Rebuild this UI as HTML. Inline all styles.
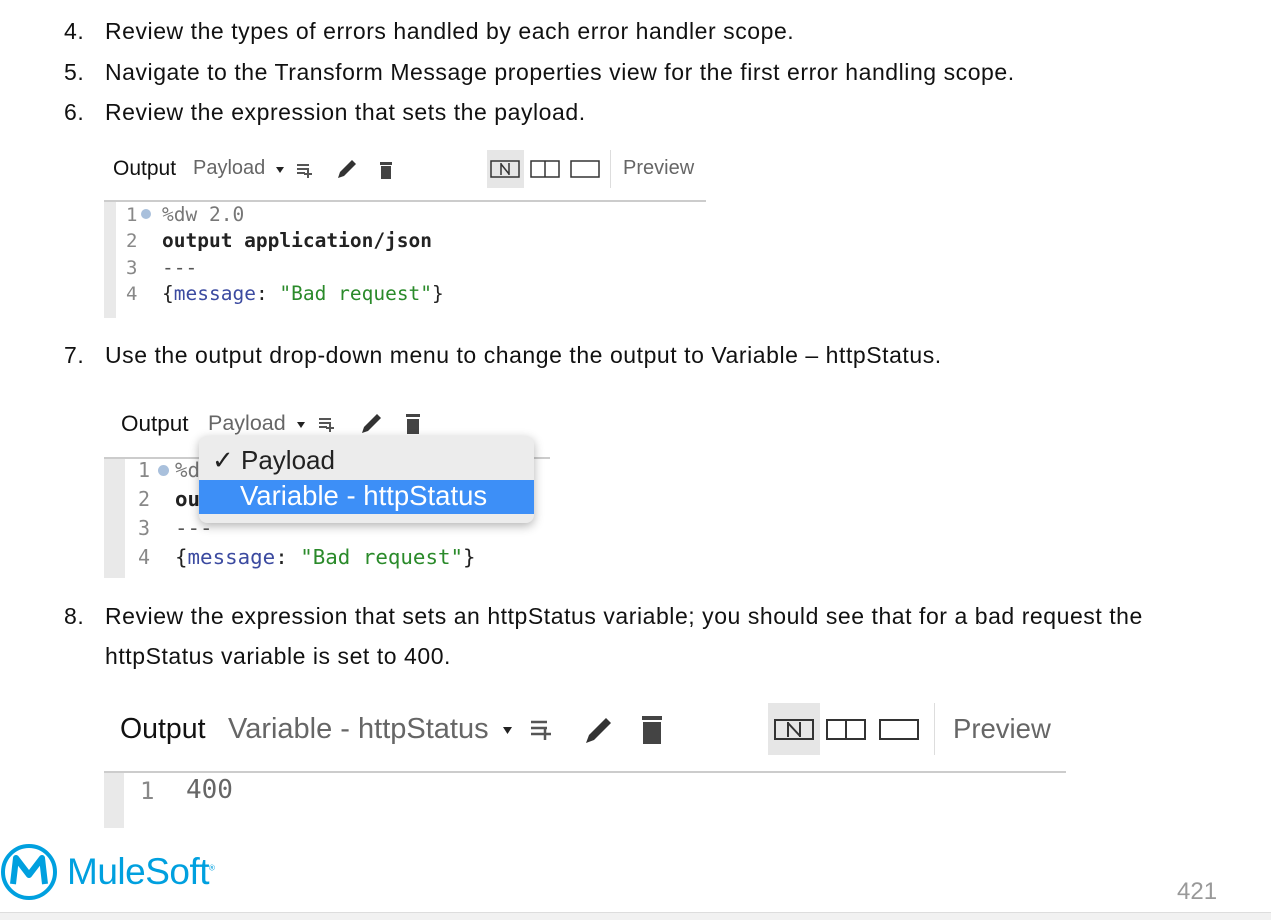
<!DOCTYPE html>
<html><head><meta charset="utf-8"><style>
body{margin:0;width:1271px;height:919px;background:#fff;position:relative;overflow:hidden;font-family:"Liberation Sans",Arial,sans-serif;color:#111}
.a{position:absolute;white-space:nowrap}
.li{font-size:23px;line-height:24px;letter-spacing:0.55px}
.mono{font-family:"DejaVu Sans Mono","Liberation Mono",monospace}
.g{color:#555}
</style></head><body>
<div class="a li" style="left:64px;top:19px">4.</div><div class="a li" style="left:105px;top:19px">Review the types of errors handled by each error handler scope.</div>
<div class="a li" style="left:64px;top:60px">5.</div><div class="a li" style="left:105px;top:60px">Navigate to the Transform Message properties view for the first error handling scope.</div>
<div class="a li" style="left:64px;top:100px">6.</div><div class="a li" style="left:105px;top:100px">Review the expression that sets the payload.</div>
<div class="a li" style="left:64px;top:343px">7.</div><div class="a li" style="left:105px;top:343px">Use the output drop-down menu to change the output to Variable – httpStatus.</div>
<div class="a li" style="left:64px;top:604px">8.</div><div class="a li" style="left:105px;top:604px">Review the expression that sets an httpStatus variable; you should see that for a bad request the</div>
<div class="a li" style="left:105px;top:644px">httpStatus variable is set to 400.</div>

<!-- Screenshot 1 -->
<div class="a" style="left:113px;top:157px;font-size:21px">Output</div>
<div class="a g" style="left:193px;top:157px;font-size:20px;color:#666">Payload</div>
<svg class="a" style="left:270px;top:156px" width="140" height="28">
<path d="M6 11 L14 11 L10 17Z" fill="#222"/>
<g stroke="#555" stroke-width="2"><path d="M27 9h12M27 13h12M27 17h8M38 13v9M34 18h8"/></g>
<path d="M68 22l2-6 12-12 4 4-12 12z" fill="#333"/>
<rect x="110" y="6" width="12" height="3" fill="#444"/><rect x="111" y="10" width="10" height="13" fill="#444"/>
</svg>
<div class="a" style="left:487px;top:150px;width:37px;height:38px;background:#e6e6e6"></div>
<svg class="a" style="left:487px;top:150px" width="120" height="38">
<g fill="none" stroke="#333" stroke-width="1.5"><rect x="4" y="11" width="28" height="16"/><rect x="44" y="11" width="28" height="16"/><line x1="58" y1="11" x2="58" y2="27"/><rect x="84" y="11" width="28" height="16"/><path d="M14 13v12M22 13v12M14 14l8 10"/></g>
</svg>
<div class="a" style="left:610px;top:150px;width:1px;height:38px;background:#ddd"></div>
<div class="a" style="left:623px;top:157px;font-size:20px;color:#666">Preview</div>
<div class="a" style="left:104px;top:200px;width:602px;height:2px;background:#ccc"></div>
<div class="a" style="left:104px;top:202px;width:12px;height:116px;background:#e9e9e9"></div>
<div class="a mono" style="left:126px;top:202px;font-size:19px;line-height:26.3px;color:#888">1<br>2<br>3<br>4</div>
<div class="a" style="left:141px;top:209px;width:10px;height:10px;border-radius:50%;background:#a9c0dc"></div>
<div class="a mono" style="left:162px;top:202px;font-size:19.5px;line-height:26.3px;color:#222"><span style="color:#777">%dw 2.0</span><br><b style="font-weight:600">output application/json</b><br><span style="color:#555">---</span><br>{<span style="color:#3b4aa0">message</span>: <span style="color:#2a8a2a">"Bad request"</span>}</div>

<!-- Screenshot 2 -->
<div class="a" style="left:121px;top:411px;font-size:22.5px">Output</div>
<div class="a" style="left:208px;top:411px;font-size:21.5px;color:#666">Payload</div>
<svg class="a" style="left:290px;top:410px" width="150" height="28">
<path d="M7 12 L15 12 L11 18Z" fill="#222"/>
<g stroke="#555" stroke-width="2"><path d="M29 9h12M29 13h12M29 17h8M40 13v9M36 18h8"/></g>
<path d="M72 23l2-6 13-13 4 4-13 13z" fill="#333"/>
<rect x="116" y="4" width="14" height="3" fill="#444"/><rect x="117" y="9" width="12" height="15" fill="#444"/>
</svg>
<div class="a" style="left:104px;top:457px;width:446px;height:2px;background:#ccc"></div>
<div class="a" style="left:104px;top:459px;width:21px;height:119px;background:#e9e9e9"></div>
<div class="a mono" style="left:138px;top:456px;font-size:20px;line-height:29px;color:#888">1<br>2<br>3<br>4</div>
<div class="a" style="left:158px;top:465px;width:11px;height:11px;border-radius:50%;background:#a9c0dc"></div>
<div class="a mono" style="left:175px;top:456px;font-size:20.8px;line-height:29px;color:#222"><span style="color:#777">%d</span><br><b>ou</b><br><span style="color:#555">---</span><br>{<span style="color:#3b4aa0">message</span>: <span style="color:#2a8a2a">"Bad request"</span>}</div>
<div class="a" style="left:199px;top:436px;width:335px;height:87px;background:#ececec;border-radius:8px;box-shadow:0 3px 10px rgba(0,0,0,.3)"></div>
<div class="a" style="left:212px;top:445px;font-size:26px;color:#222">✓ Payload</div>
<div class="a" style="left:199px;top:480px;width:335px;height:34px;background:#3d8ff7"></div>
<div class="a" style="left:240px;top:480px;font-size:27.5px;color:#fff">Variable - httpStatus</div>

<!-- Screenshot 3 -->
<div class="a" style="left:120px;top:713px;font-size:28.5px">Output</div>
<div class="a" style="left:228px;top:713px;font-size:29px;color:#666">Variable - httpStatus</div>
<svg class="a" style="left:498px;top:712px" width="180" height="36">
<path d="M5 15 L14 15 L9.5 22Z" fill="#222"/>
<g stroke="#555" stroke-width="2.5"><path d="M33 10h16M33 16h16M33 22h10M47 16v12M41 22h12"/></g>
<path d="M88 31l3-8 17-17 5 5-17 17z" fill="#333"/>
<rect x="144" y="4" width="20" height="4" fill="#444"/><rect x="145" y="10" width="18" height="22" fill="#444"/>
</svg>
<div class="a" style="left:768px;top:703px;width:52px;height:52px;background:#e6e6e6"></div>
<svg class="a" style="left:768px;top:703px" width="160" height="52">
<g fill="none" stroke="#333" stroke-width="2"><rect x="7" y="17" width="38" height="19"/><rect x="59" y="17" width="38" height="19"/><line x1="78" y1="17" x2="78" y2="36"/><rect x="112" y="17" width="38" height="19"/><path d="M20 19v15M32 19v15M20 20l12 13"/></g>
</svg>
<div class="a" style="left:934px;top:703px;width:1px;height:52px;background:#ddd"></div>
<div class="a" style="left:953px;top:713px;font-size:27.5px;color:#666">Preview</div>
<div class="a" style="left:104px;top:771px;width:962px;height:2px;background:#ccc"></div>
<div class="a" style="left:104px;top:773px;width:20px;height:55px;background:#e9e9e9"></div>
<div class="a mono" style="left:140px;top:777px;font-size:24px;color:#888">1</div>
<div class="a mono" style="left:186px;top:775px;font-size:26px;color:#666">400</div>

<!-- footer -->
<svg class="a" style="left:0;top:843px" width="60" height="60">
<circle cx="29" cy="29" r="26" fill="none" stroke="#00a0df" stroke-width="4"/>
<path d="M13 41 L16 15 L29 32 L42 15 L45 41" fill="none" stroke="#00a0df" stroke-width="6" stroke-linejoin="round"/>
</svg>
<div class="a" style="left:67px;top:851px;font-size:37px;color:#00a0df;letter-spacing:-0.5px">MuleSoft<sup style="font-size:8px">®</sup></div>
<div class="a" style="left:1177px;top:878px;font-size:24px;color:#999">421</div>
<div class="a" style="left:0;top:912px;width:1271px;height:7px;background:#f1f1f1;border-top:1px solid #ddd"></div>
</body></html>
